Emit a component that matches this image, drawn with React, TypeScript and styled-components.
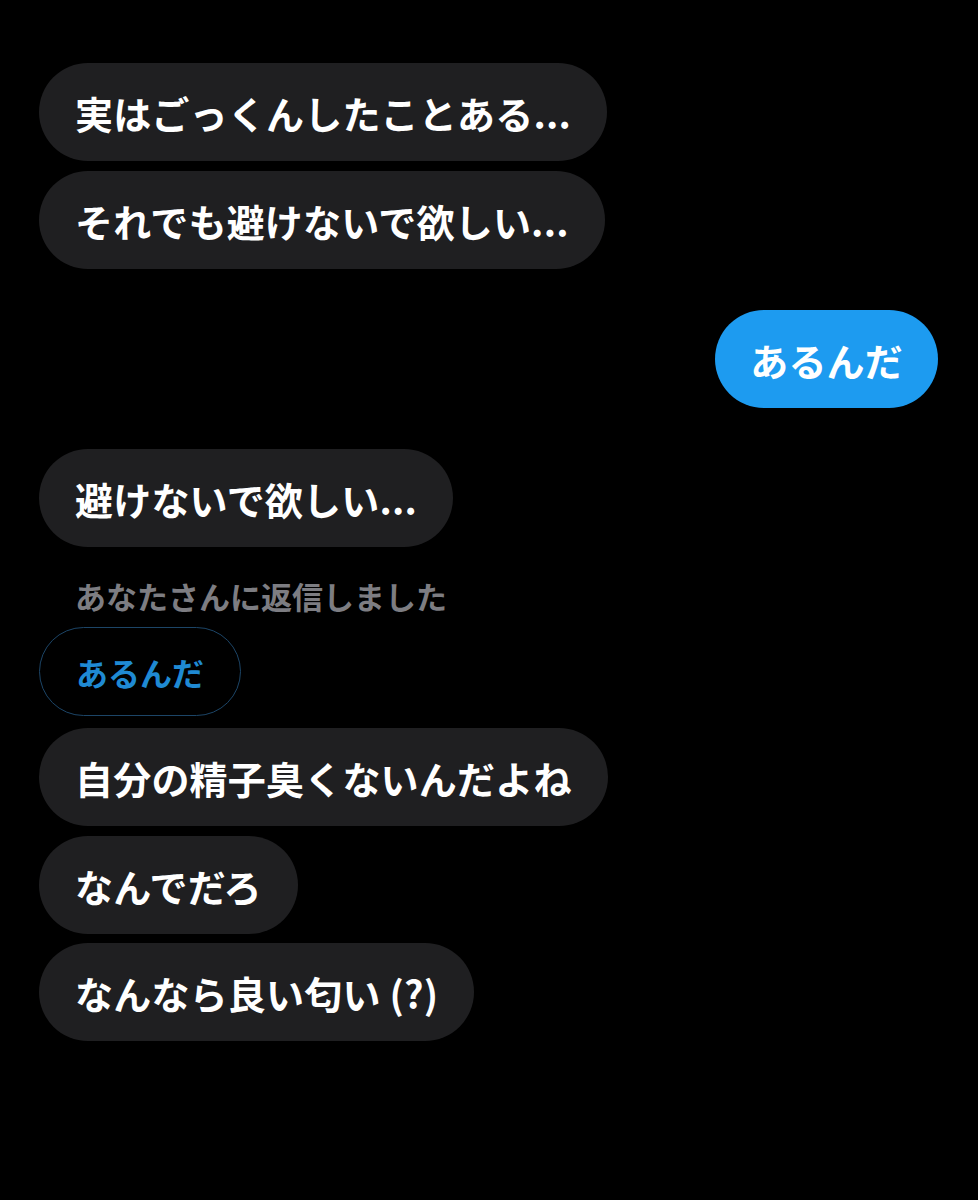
import React from "react";
import styled, { createGlobalStyle } from "styled-components";

const Global = createGlobalStyle`
  html, body { margin: 0; padding: 0; background: #000; }
  body { font-family: "Noto Sans CJK JP", "Noto Sans", sans-serif; }
`;

const Page = styled.div`
  min-height: 1200px;
  background: #000;
  padding: 63px 40px 0 39px;
  box-sizing: border-box;
  display: flex;
  flex-direction: column;
`;

const Row = styled.div<{ $mine?: boolean; $gap: number }>`
  display: flex;
  justify-content: ${(p) => (p.$mine ? "flex-end" : "flex-start")};
  margin-top: ${(p) => p.$gap}px;
`;

const Bubble = styled.div<{ $mine?: boolean }>`
  height: 98px;
  padding: 0 ${(p) => (p.$mine ? 35 : 36)}px;
  box-sizing: border-box;
  border-radius: 49px;
  display: flex;
  align-items: center;
  background: ${(p) => (p.$mine ? "#1d9bf0" : "#1f1f21")};
  color: #fff;
  font-size: 38px;
  font-weight: 600;
  white-space: nowrap;
  letter-spacing: 0.2px;
`;

const ReplyLabel = styled.div`
  margin-top: 29px;
  padding-left: 36px;
  line-height: 40px;
  font-size: 31px;
  font-weight: 600;
  color: #7d7d82;
  white-space: nowrap;
`;

const Quote = styled.div`
  margin-top: 11px;
  align-self: flex-start;
  height: 89px;
  padding: 0 36px;
  box-sizing: border-box;
  border-radius: 45px;
  border: 1.5px solid #1c4567;
  display: flex;
  align-items: center;
  color: #1f8ad3;
  font-size: 32px;
  font-weight: 600;
  white-space: nowrap;
`;

type Msg = { text: string; mine?: boolean; gap: number };

const first: Msg[] = [
  { text: "実はごっくんしたことある...", gap: 0 },
  { text: "それでも避けないで欲しい...", gap: 10 },
  { text: "あるんだ", mine: true, gap: 41 },
  { text: "避けないで欲しい...", gap: 41 },
];

const second: Msg[] = [
  { text: "自分の精子臭くないんだよね", gap: 12 },
  { text: "なんでだろ", gap: 10 },
  { text: "なんなら良い匂い (?)", gap: 9 },
];

const renderMsg = (m: Msg, i: number) => (
  <Row key={i} $mine={m.mine} $gap={m.gap}>
    <Bubble $mine={m.mine}>{m.text}</Bubble>
  </Row>
);

export default function App() {
  return (
    <>
      <Global />
      <Page>
        {first.map(renderMsg)}
        <ReplyLabel>あなたさんに返信しました</ReplyLabel>
        <Quote>あるんだ</Quote>
        {second.map(renderMsg)}
      </Page>
    </>
  );
}
